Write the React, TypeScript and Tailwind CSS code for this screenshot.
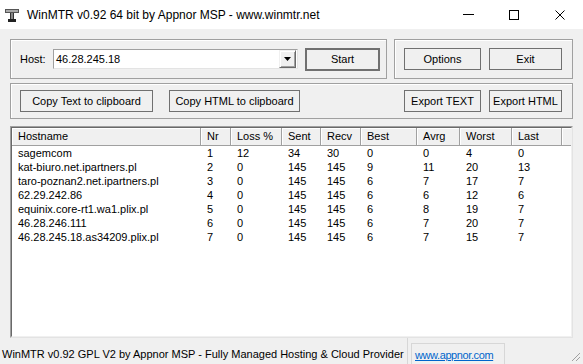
import React from "react";

const ui = { fontFamily: '"Liberation Sans", Arial, sans-serif' };
const seg = { fontFamily: '"Liberation Sans", Arial, sans-serif' };

function Btn({ label, w, def }: { label: string; w: number; def?: boolean }) {
  return (
    <div
      className={
        "h-[22px] flex items-center justify-center bg-[#f0f0f0] text-[11px] text-black " +
        (def ? "border-2 border-[#707070] h-[23px]" : "border border-[#707070]")
      }
      style={{ width: w }}
    >
      {label}
    </div>
  );
}

const cols = [
  { name: "Hostname", w: 189 },
  { name: "Nr", w: 30 },
  { name: "Loss %", w: 51 },
  { name: "Sent", w: 39 },
  { name: "Recv", w: 40 },
  { name: "Best", w: 56 },
  { name: "Avrg", w: 43 },
  { name: "Worst", w: 52 },
  { name: "Last", w: 50 },
];

const rows = [
  ["sagemcom", "1", "12", "34", "30", "0", "0", "4", "0"],
  ["kat-biuro.net.ipartners.pl", "2", "0", "145", "145", "9", "11", "20", "13"],
  ["taro-poznan2.net.ipartners.pl", "3", "0", "145", "145", "6", "7", "17", "7"],
  ["62.29.242.86", "4", "0", "145", "145", "6", "6", "12", "6"],
  ["equinix.core-rt1.wa1.plix.pl", "5", "0", "145", "145", "6", "8", "19", "7"],
  ["46.28.246.111", "6", "0", "145", "145", "6", "7", "20", "7"],
  ["46.28.245.18.as34209.plix.pl", "7", "0", "145", "145", "6", "7", "15", "7"],
];

export default function App() {
  return (
    <div className="w-[583px] h-[364px] bg-[#f0f0f0] flex flex-col overflow-hidden relative" style={ui}>
      {/* Title bar */}
      <div className="h-[29px] bg-white flex items-center shrink-0">
        <svg width="14" height="14" viewBox="0 0 14 14" className="ml-[5px] mr-[8px]">
          <rect x="0" y="1" width="14" height="4" fill="#555" />
          <rect x="1" y="2" width="12" height="2" fill="#aaa" />
          <rect x="5" y="5" width="4" height="7" fill="#333" />
          <rect x="6" y="5" width="2" height="7" fill="#888" />
          <rect x="3" y="11" width="8" height="3" fill="#222" />
        </svg>
        <span className="text-[12px] text-black" style={seg}>
          WinMTR v0.92 64 bit by Appnor MSP - www.winmtr.net
        </span>
        <div className="ml-auto flex items-center h-full">
          <div className="w-[46px] h-full flex items-center justify-center">
            <div className="w-[11px] h-px bg-black" />
          </div>
          <div className="w-[46px] h-full flex items-center justify-center">
            <div className="w-[10px] h-[10px] border border-black" />
          </div>
          <div className="w-[46px] h-full flex items-center justify-center">
            <svg width="10" height="10" viewBox="0 0 10 10">
              <path d="M0.5 0.5 L9.5 9.5 M9.5 0.5 L0.5 9.5" stroke="#000" strokeWidth="1" />
            </svg>
          </div>
        </div>
      </div>

      {/* Main */}
      <div className="flex-1 flex flex-col pl-[10px] pt-[10px] min-h-0">
        <div className="flex gap-[7px] h-[41px]">
          <div className="w-[377px] h-full border border-[#a0a0a0] shadow-[inset_1px_1px_0_#fff] flex items-center pl-[9px]">
            <span className="w-[33px] text-[11px] text-black">Host:</span>
            <div className="w-[245px] h-[20px] bg-white border border-[#a0a0a0] border-r-[#e3e3e3] border-b-[#e3e3e3] flex items-center">
              <span className="flex-1 pl-[2px] text-[11px] text-black">46.28.245.18</span>
              <div className="w-[17px] h-[18px] bg-[#f0f0f0] border border-[#f0f0f0] border-r-[#696969] border-b-[#696969] shadow-[inset_1px_1px_0_#fff,inset_-1px_-1px_0_#a0a0a0] flex items-center justify-center mr-px">
                <svg width="7" height="4" viewBox="0 0 7 4">
                  <path d="M0 0 H7 L3.5 4 Z" fill="#000" />
                </svg>
              </div>
            </div>
            <div className="ml-[7px]">
              <Btn label="Start" w={75} def />
            </div>
          </div>
          <div className="w-[179px] h-full border border-[#a0a0a0] shadow-[inset_1px_1px_0_#fff] flex items-center pl-[9px] gap-[8px]">
            <Btn label="Options" w={77} />
            <Btn label="Exit" w={73} />
          </div>
        </div>

        <div className="mt-[4px] w-[563px] h-[36px] border border-[#a0a0a0] shadow-[inset_1px_1px_0_#fff] flex items-center pl-[9px] pr-[10px]">
          <Btn label="Copy Text to clipboard" w={133} />
          <div className="ml-[16px]">
            <Btn label="Copy HTML to clipboard" w={131} />
          </div>
          <div className="ml-auto flex gap-[8px]">
            <Btn label="Export TEXT" w={77} />
            <Btn label="Export HTML" w={73} />
          </div>
        </div>

        {/* List */}
        <div className="mt-[7px] w-[563px] h-[212px] bg-white border border-[#a0a0a0] border-r-[#e3e3e3] border-b-[#e3e3e3] shrink-0">
          <div className="h-full w-full border border-[#696969] border-r-[#f0f0f0] border-b-[#f0f0f0] overflow-hidden">
            <div className="flex h-[18px] bg-[#f0f0f0] border-b border-[#a0a0a0]">
              {cols.map((c) => (
                <div
                  key={c.name}
                  className="h-full border-r border-[#a0a0a0] shadow-[inset_1px_1px_0_#fff] flex items-center pl-[6px] text-[11px] text-black shrink-0"
                  style={{ width: c.w }}
                >
                  {c.name}
                </div>
              ))}
              <div className="flex-1 h-full shadow-[inset_1px_1px_0_#fff]" />
            </div>
            {rows.map((r, i) => (
              <div key={i} className="flex h-[14px] items-center">
                {r.map((v, j) => (
                  <div
                    key={j}
                    className="pl-[6px] text-[11px] leading-[14px] text-black shrink-0 whitespace-nowrap"
                    style={{ width: cols[j].w }}
                  >
                    {v}
                  </div>
                ))}
              </div>
            ))}
          </div>
        </div>
      </div>

      {/* Status bar */}
      <div className="h-[26px] flex items-center shrink-0 relative">
        <div className="w-[408px] h-full flex items-center pl-[2px] pt-[6px] border-r border-[#d7d7d7]">
          <span className="text-[11px] text-black whitespace-nowrap" style={seg}>
            WinMTR v0.92 GPL V2 by Appnor MSP - Fully Managed Hosting &amp; Cloud Provider
          </span>
        </div>
        <div className="ml-[3px] w-[94px] h-[21px] self-end flex items-center pl-[3px] pt-[2px] border-l border-r border-t border-[#d7d7d7]">
          <span className="text-[11px] tracking-[-0.4px] text-[#0066cc] underline whitespace-nowrap" style={seg}>
            www.appnor.com
          </span>
        </div>
        <svg width="12" height="12" viewBox="0 0 12 12" className="absolute right-[2px] bottom-[2px]">
          <path d="M11 3 L3 11 M11 7 L7 11" stroke="#a0a0a0" strokeWidth="1" />
        </svg>
      </div>
    </div>
  );
}
